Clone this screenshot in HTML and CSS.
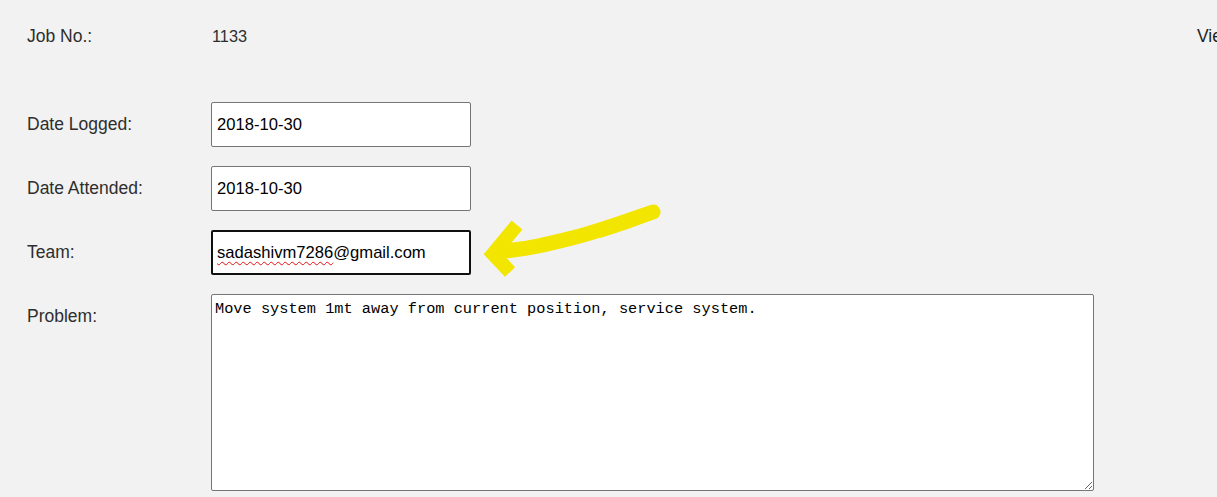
FILE: index.html
```html
<!DOCTYPE html>
<html>
<head>
<meta charset="utf-8">
<link rel="stylesheet" href="styles.css">
</head>
<body>
<div class="page">
  <div class="head-row">
    <span class="label">Job No.:</span>
    <span class="value">1133</span>
    <span class="view">View Job</span>
  </div>
  <div class="form">
    <div class="row">
      <span class="label">Date Logged:</span>
      <div class="field">2018-10-30</div>
    </div>
    <div class="row">
      <span class="label">Date Attended:</span>
      <div class="field">2018-10-30</div>
    </div>
    <div class="row">
      <span class="label">Team:</span>
      <div class="field focused"><span class="misspelled">sadashivm7286</span>@gmail.com</div>
    </div>
    <div class="row">
      <span class="label">Problem:</span>
      <textarea class="area" spellcheck="false">Move system 1mt away from current position, service system.</textarea>
    </div>
  </div>
</div>
<svg class="annot" viewBox="0 0 1217 497" width="1217" height="497">
  <path d="M653 212 C620 223 600 231 572 238 C548 244 528 249 504 251" fill="none" stroke="#f2e600" stroke-width="15" stroke-linecap="round"/>
  <path d="M600 226 C620 220 640 213 657 205 L659 217 C640 225 620 232 600 238 Z" fill="#f2e600"/>
  <path d="M517 225 L493 254 L510 272" fill="none" stroke="#f2e600" stroke-width="14" stroke-linecap="butt" stroke-linejoin="miter"/>
</svg>
</body>
</html>
```
FILE: styles.css
```css
html, body {
  margin: 0;
  padding: 0;
  background: #f2f2f2;
  overflow: hidden;
}
body {
  width: 1217px;
  height: 497px;
  position: relative;
  font-family: "Liberation Sans", Arial, sans-serif;
}
.page {
  padding-left: 27px;
}
.head-row {
  display: flex;
  align-items: center;
  padding-top: 26px;
  height: 20px;
  margin-bottom: 56px;
  white-space: nowrap;
}
.head-row .label {
  line-height: 20px;
}
.label {
  width: 184px;
  flex: none;
  font-size: 17.5px;
  line-height: 45px;
  color: #2e2e2e;
}
.value {
  font-size: 16.3px;
  color: #2e2e2e;
  padding-left: 1px;
  width: 985px;
  flex: none;
}
.view {
  font-size: 17.5px;
  color: #1e1e1e;
  flex: none;
}
.form {
  display: flex;
  flex-direction: column;
  gap: 19px;
}
.row {
  display: flex;
  align-items: flex-start;
}
.field {
  box-sizing: border-box;
  width: 260px;
  height: 45px;
  background: #fff;
  border: 1px solid #767676;
  border-radius: 2px;
  padding: 0 5px;
  font-size: 16.6px;
  line-height: 43px;
  color: #000;
  white-space: nowrap;
}
.field.focused {
  border: 2px solid #101010;
  line-height: 41px;
  padding: 0 4px;
}
.misspelled {
  text-decoration: underline wavy #e01010;
  text-decoration-thickness: 1px;
  text-underline-offset: 3px;
}
.area {
  box-sizing: border-box;
  width: 883px;
  height: 197px;
  margin: 0;
  background: #fff;
  border: 1px solid #767676;
  border-radius: 2px;
  padding: 4px 3px;
  font-family: "Liberation Mono", "DejaVu Sans Mono", monospace;
  font-size: 15.3px;
  line-height: 20px;
  color: #000;
  resize: both;
}
.annot {
  position: absolute;
  top: 0;
  left: 0;
  pointer-events: none;
}
```
